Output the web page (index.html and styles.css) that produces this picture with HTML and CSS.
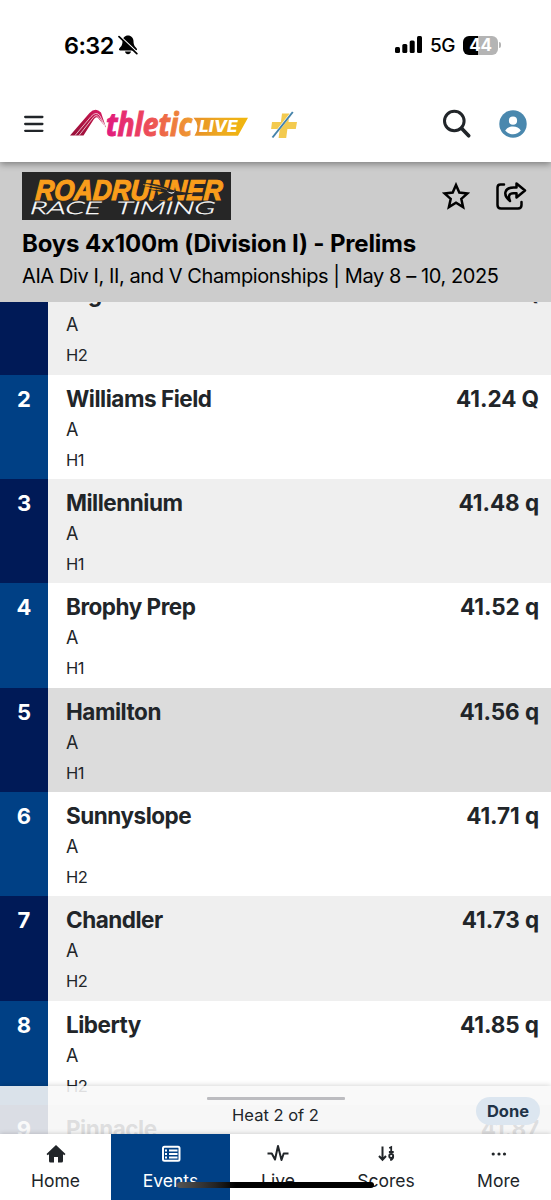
FILE: index.html
```html
<!DOCTYPE html>
<html lang="en">
<head>
<meta charset="utf-8">
<title>Boys 4x100m (Division I) - Prelims</title>
<link rel="stylesheet" href="styles.css">
</head>
<body>
<div class="phone">
  <header class="top">
    <div class="status">
      <span class="clock">6:32</span>
      <svg class="bell" width="20" height="20" viewBox="0 0 20 20"><path d="M10 .5C6.800.5 4.500 3 4.500 6c0 4.500-1.500 5.500-3.200 7.500-.8 1 0 2 .9 2h15.600c.9 0 1.700-1 .9-2-1.700-2-3.200-3-3.200-7.500 0-3-2.300-5.500-5.500-5.500zM7 16.500c.4 1.700 1.500 2.700 3 2.700s2.600-1 3-2.700z"/><path d="M1.800.8 19.500 17.500" stroke="#fff" stroke-width="1.300"/><path d="M1 1.700 18.800 18.700" stroke="#000" stroke-width="1.700" stroke-linecap="round"/></svg>
      <svg class="signal" width="28" height="18" viewBox="0 0 28 18"><rect x="0" y="11" width="5" height="6" rx="1.500"/><rect x="7.300" y="8" width="5" height="9" rx="1.500"/><rect x="14.700" y="4.500" width="5" height="12.500" rx="1.500"/><rect x="22" y="0" width="5" height="17" rx="1.500"/></svg>
      <span class="network">5G</span>
      <span class="battery">44</span><i class="battery-tip"></i>
    </div>
    <div class="bar">
      <svg class="menu" width="20" height="18" viewBox="0 0 20 18"><path d="M1.200 2h17.200M1.200 9h17.200M1.200 15.800h17.200" stroke="#212529" stroke-width="2.300" stroke-linecap="round"/></svg>
      <svg class="brand" width="180" height="30" viewBox="0 0 180 30">
        <defs>
          <linearGradient id="word" gradientUnits="userSpaceOnUse" x1="36" y1="0" x2="123" y2="0"><stop offset="0" stop-color="#e01a7e"/><stop offset=".4" stop-color="#ec4060"/><stop offset=".7" stop-color="#ee6e45"/><stop offset="1" stop-color="#efa02d"/></linearGradient>
          <linearGradient id="live" x1="0" x2="1"><stop offset="0" stop-color="#e88f28"/><stop offset=".5" stop-color="#edaa20"/><stop offset="1" stop-color="#f1b70c"/></linearGradient>
          <linearGradient id="track" x1="0" y1="1" x2="1" y2="0"><stop offset="0" stop-color="#97103a"/><stop offset=".6" stop-color="#b71345"/><stop offset="1" stop-color="#e01c6b"/></linearGradient>
        </defs>
        <path d="M0 26.500 19.500 4Q25.500-2 31 3.500L36 18.500 28.500 9.500Q26.500 7 24 10L13.500 26.500z" fill="url(#track)"/>
        <path d="M5 26.500 21 7.500Q26 2 29.800 6.500L35 17M9 26.500 22.800 9Q26 4.500 29 8.500L35 17" fill="none" stroke="#fff" stroke-width=".7"/>
        <text class="brand-word" x="36" y="26.500" textLength="86" lengthAdjust="spacingAndGlyphs" fill="url(#word)">thletic</text>
        <path d="M123.500 8.700H178L168 26.700H124.500Q131 17 123.500 8.700z" fill="url(#live)"/>
        <text class="brand-live" x="129" y="23" textLength="38.500" lengthAdjust="spacingAndGlyphs">LIVE</text>
      </svg>
      <svg class="plus" width="28" height="30" viewBox="0 0 28 30"><path d="M12 3.500h7.500L18.500 12H27l-1.200 7h-8.400l-1.200 9H8.600l1.200-9H1.100L2 12h8.900z" fill="#f3ca4f"/><path d="M3 26.500 22.500 2" stroke="#fff" stroke-width="2.600"/><path d="M2.500 27.500 22.800 2" stroke="#4583aa" stroke-width="2"/></svg>
      <svg class="search" width="30" height="30" viewBox="0 0 30 30" fill="none" stroke="#212529"><circle cx="12.300" cy="12" r="9.800" stroke-width="3"/><path d="m19.500 19.300 7.200 7.400" stroke-width="3.700" stroke-linecap="round"/></svg>
      <svg class="user" width="28" height="28" viewBox="0 0 28 28"><circle cx="14" cy="14" r="13.700" fill="#4a88ae"/><circle cx="14" cy="10.700" r="4.100" fill="#fff"/><path d="M6.200 20.500c1.500-2.500 4.300-4 7.800-4s6.300 1.500 7.800 4c-1.800 2.400-4.800 3.800-7.800 3.800s-6-1.400-7.800-3.800z" fill="#fff"/></svg>
    </div>
  </header>

  <section class="event">
    <div class="event-row">
      <svg class="sponsor" width="209" height="48" viewBox="0 0 209 48">
        <rect width="209" height="48" fill="#262626"/>
        <g transform="translate(13 27.700) skewX(-4)"><text class="sponsor-top" textLength="187" lengthAdjust="spacingAndGlyphs">ROADRUNNER</text></g>
        <path d="M130 28Q136 22 142 20.500L126 17.500 139 18 122 14 138 15.500 120 10.800Q137 11.500 149 17.500 156 20 173 21.500L160 23Q149 23 144 28z" fill="#262626"/>
        <path d="M121 12.500q14 1 24 5M124 16l15 2" fill="none" stroke="#f99d1b" stroke-width=".6"/>
        <path d="M144.500 18.500q4 3.500 8.500 1-3.500 5-8.500-1z" fill="#fff"/>
        <g transform="translate(6.500 41.500) skewX(-17)"><text class="sponsor-low" textLength="71" lengthAdjust="spacingAndGlyphs">RACE</text><text class="sponsor-low" x="86" textLength="99" lengthAdjust="spacingAndGlyphs">TIMING</text></g>
      </svg>
      <svg class="star" width="28" height="28" viewBox="0 0 28 28"><path d="m14 3 3.300 7.600 8.200.8-6.200 5.500 1.800 8.200-7.100-4.300-7.100 4.300 1.800-8.200-6.200-5.500 8.200-.8z" fill="none" stroke="#000" stroke-width="2.500"/></svg>
      <svg class="share" width="32" height="30" viewBox="0 0 32 30" fill="none" stroke="#000" stroke-width="2.500" stroke-linecap="round" stroke-linejoin="round"><path d="M9 3.500H5.500Q2.500 3.500 2.500 6.500V24q0 3.500 3.500 3.500h17q3.500 0 3.500-3.500v-3"/><path d="m21.500 2.500 8.500 7-8.500 7v-4.200h-3c-4.500 0-5.500 2.700-3.500 7.700-8-6.500-5-13.500 3.500-13.500h3z"/></svg>
    </div>
    <h1>Boys 4x100m (Division I) - Prelims</h1>
    <p>AIA Div I, II, and V Championships | May 8 – 10, 2025</p>
  </section>

  <main class="results">
    <div class="rows">
      <div class="row"><b class="rank">1</b><div class="team"><b>Highland</b><span>A</span><small>H2</small></div><b class="time">40.99 Q</b></div>
      <div class="row"><b class="rank">2</b><div class="team"><b>Williams Field</b><span>A</span><small>H1</small></div><b class="time">41.24 Q</b></div>
      <div class="row"><b class="rank">3</b><div class="team"><b>Millennium</b><span>A</span><small>H1</small></div><b class="time">41.48 q</b></div>
      <div class="row"><b class="rank">4</b><div class="team"><b>Brophy Prep</b><span>A</span><small>H1</small></div><b class="time">41.52 q</b></div>
      <div class="row active"><b class="rank">5</b><div class="team"><b>Hamilton</b><span>A</span><small>H1</small></div><b class="time">41.56 q</b></div>
      <div class="row"><b class="rank">6</b><div class="team"><b>Sunnyslope</b><span>A</span><small>H2</small></div><b class="time">41.71 q</b></div>
      <div class="row"><b class="rank">7</b><div class="team"><b>Chandler</b><span>A</span><small>H2</small></div><b class="time">41.73 q</b></div>
      <div class="row"><b class="rank">8</b><div class="team"><b>Liberty</b><span>A</span><small>H2</small></div><b class="time">41.85 q</b></div>
      <div class="row"><b class="rank">9</b><div class="team"><b>Pinnacle</b><span>A</span><small>H2</small></div><b class="time">41.87</b></div>
    </div>
    <div class="sheet"><i class="grip"></i><span class="heat">Heat 2 of 2</span><span class="done">Done</span></div>
  </main>

  <nav class="tabs">
    <div class="tab home"><svg width="20" height="20" viewBox="0 0 20 20"><path d="M10 1 19.500 10 18.300 11.300 17 10.200V17q0 1.500-1.500 1.500H12V13H8v5.500H4.500Q3 18.500 3 17V10.200L1.700 11.300.5 10z" fill="#212529"/></svg><span>Home</span></div>
    <div class="tab on"><svg width="20" height="20" viewBox="0 0 20 20" fill="none" stroke="#fff" stroke-width="2"><rect x="2" y="2.800" width="16.500" height="14" rx="1.500"/><path d="M8 6.500h8.500M8 10h8.500M8 13.500h8.500M4 6.500h2M4 10h2M4 13.500h2"/></svg><span>Events</span></div>
    <div class="tab live"><svg width="22" height="20" viewBox="0 0 22 20"><path d="M.5 9.500h4.300L8 15.500 11 2l3.500 14 2.200-6.500h4.800" fill="none" stroke="#212529" stroke-width="2" stroke-linejoin="round"/></svg><span>Live</span></div>
    <div class="tab scores"><svg width="20" height="20" viewBox="0 0 20 20" fill="none" stroke="#212529" stroke-width="2"><path d="M6.500 2.500v13M3 12l3.500 3.800L10 12"/><path d="M13.200 4l2-.8V8M12.900 8h4.800" stroke-width="1.800"/><circle cx="15.200" cy="12" r="2" stroke-width="1.800"/><path d="M17.200 12q0 3.500-3 4.200" stroke-width="1.800"/></svg><span>Scores</span></div>
    <div class="tab more"><svg width="20" height="20" viewBox="0 0 20 20" fill="#212529"><circle cx="4.200" cy="10" r="1.600"/><circle cx="10" cy="10" r="1.600"/><circle cx="15.500" cy="10" r="1.600"/></svg><span>More</span></div>
    <i class="home-indicator"></i>
  </nav>
</div>
</body>
</html>
```

FILE: styles.css
```css
* { box-sizing: border-box; }
body { margin: 0; font-family: Inter, "Liberation Sans", sans-serif; color: #212529; background: #fff; }
svg { display: block; flex: none; }
.phone { width: 551px; height: 1200px; display: flex; flex-direction: column; overflow: hidden; }
.top { height: 162px; flex: none; background: #fff; position: relative; z-index: 2; box-shadow: 0 2px 7px rgba(0,0,0,.4); }
.status { height: 84px; padding: 6px 50px 0 64px; display: flex; align-items: center; color: #000; }
.clock { width: 50px; font-size: 23.500px; font-weight: 600; letter-spacing: -.6px; white-space: nowrap; }
.bell { margin-left: 4px; }
.signal { margin-left: auto; }
.network { margin-left: 7px; width: 33px; font-size: 19px; font-weight: 500; letter-spacing: -.5px; }
.battery { width: 35px; height: 19px; border-radius: 6px; background: linear-gradient(90deg, #000 44%, #b4b4b4 44%); color: #fff; font-size: 17px; line-height: 19px; font-weight: 700; text-align: center; letter-spacing: -.3px; }
.battery-tip { width: 2px; height: 6px; margin-left: 1px; border-radius: 0 2px 2px 0; background: #b4b4b4; }
.bar { height: 78px; padding: 1px 24px 0; display: flex; align-items: center; }
.brand { margin-left: 26px; }
.brand-word { font: italic 700 32px "Open Sans", sans-serif; stroke: url(#word); stroke-width: 1.100px; }
.brand-live { font: italic 800 16px Inter, sans-serif; fill: #fff; }
.plus { margin-left: 20px; margin-top: 3px; }
.search { margin-left: auto; }
.user { margin-left: 27px; }
.event { height: 140px; flex: none; background: #ccc; padding: 10px 24px 0 22px; color: #000; }
.event-row { height: 48px; display: flex; align-items: center; }
.sponsor-top { font: italic 900 28.500px "Liberation Sans", sans-serif; fill: #f99d1b; stroke: #f99d1b; stroke-width: 1.100px; }
.sponsor-low { font: 300 17.500px Lato, sans-serif; fill: #fff; stroke: #fff; stroke-width: .3px; }
.star { margin-left: auto; }
.share { margin-left: 25px; }
.event h1 { margin: 9px 0 0 0; font-size: 24px; line-height: 30px; font-weight: 700; white-space: nowrap; letter-spacing: -.17px; }
.event p { margin: 3px 0 0 0; font-size: 20px; line-height: 28px; white-space: nowrap; letter-spacing: -.41px; }
.results { height: 832px; flex: none; position: relative; overflow: hidden; }
.rows { margin-top: -31.800px; }
.row { height: 104.330px; display: flex; background: #fff; }
.row:nth-child(odd) { background: #efefef; }
.row.active { background: #dcdcdc; }
.rank { width: 48px; padding-top: 9px; background: #004085; color: #fff; font-size: 22px; line-height: 30px; text-align: center; }
.row:nth-child(odd) .rank { background: #001a57; }
.team { padding: 9px 0 0 18px; flex: 1; display: flex; flex-direction: column; }
.team b, .time { font-size: 22.500px; line-height: 30px; font-weight: 700; }
.team b { letter-spacing: -.48px; }
.team span { font-size: 18px; line-height: 31px; }
.team small { font-size: 16.500px; line-height: 31px; letter-spacing: -.4px; }
.time { padding: 9px 12px 0 0; letter-spacing: -.07px; }
.sheet { position: absolute; left: 0; right: 0; bottom: 0; height: 48px; background: rgba(248,248,248,.88); box-shadow: 0 0 6px rgba(0,0,0,.2); display: grid; justify-items: center; align-content: start; }
.grip { width: 138px; height: 3px; margin-top: 11px; background: #bcbcc0; border-radius: 1px; }
.heat { font-size: 16.500px; line-height: 24px; margin-top: 3px; }
.done { position: absolute; right: 11px; top: 11px; width: 64px; height: 28px; border-radius: 14px; background: #dce6f0; color: #1f3347; font-size: 16.500px; line-height: 28px; font-weight: 700; text-align: center; }
.tabs { height: 66px; flex: none; position: relative; display: grid; grid-template-columns: 111px 119px 96px 120px 105px; box-shadow: 0 0 5px rgba(0,0,0,.2); background: #fff; }
.tab { display: flex; flex-direction: column; align-items: center; padding-top: 10px; font-size: 17.500px; }
.tab span { line-height: 24px; margin-top: 5px; }
.on { background: #004085; color: #fff; }
.home-indicator { position: absolute; left: 177px; top: 48px; width: 197px; height: 6px; border-radius: 3px; background: linear-gradient(90deg, #555 0, #222 20%, #000 30%); }
```
